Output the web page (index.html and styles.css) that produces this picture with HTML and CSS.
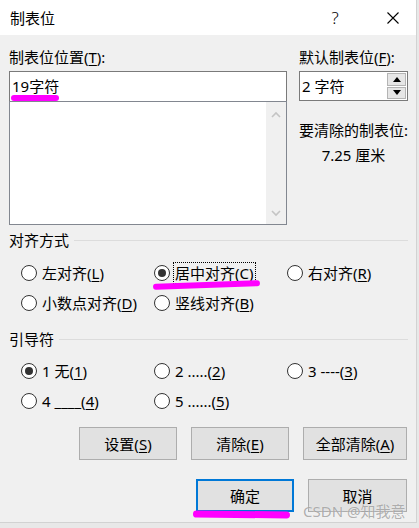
FILE: index.html
```html
<!DOCTYPE html>
<html lang="zh-CN">
<head>
<meta charset="utf-8">
<title>制表位</title>
<link rel="stylesheet" href="styles.css">
</head>
<body>
<div class="dialog">
  <div class="titlebar">
    <span class="title">制表位</span>
    <span class="tb-btn help">?</span>
    <span class="tb-btn close"><svg width="12" height="12" viewBox="0 0 12 12"><path d="M0.5 0.5L11.5 11.5M11.5 0.5L0.5 11.5" stroke="#000" stroke-width="1.1" fill="none"/></svg></span>
  </div>
  <div class="content">
    <div class="top">
      <div class="left">
        <div class="label">制表位位置(<u>T</u>):</div>
        <div class="input">19字符</div>
        <div class="listbox">
          <div class="vscroll">
            <svg width="10" height="7" viewBox="0 0 10 7"><path d="M1 6L5 2L9 6" stroke="#c4c4c4" stroke-width="1.6" fill="none"/></svg>
            <svg width="10" height="7" viewBox="0 0 10 7"><path d="M1 1L5 5L9 1" stroke="#c4c4c4" stroke-width="1.6" fill="none"/></svg>
          </div>
        </div>
      </div>
      <div class="right">
        <div class="label">默认制表位(<u>F</u>):</div>
        <div class="spinner">
          <span class="spin-text">2 字符</span>
          <div class="spin-btns">
            <div class="spin-btn"><svg width="8" height="5" viewBox="0 0 8 5"><path d="M0 5L4 0L8 5Z" fill="#000"/></svg></div>
            <div class="spin-btn"><svg width="8" height="5" viewBox="0 0 8 5"><path d="M0 0L4 5L8 0Z" fill="#000"/></svg></div>
          </div>
        </div>
        <div class="clear-label">要清除的制表位:</div>
        <div class="clear-value">7.25 厘米</div>
      </div>
    </div>

    <div class="group-head"><span>对齐方式</span><i class="rule"></i></div>
    <div class="radios">
      <div class="radio"><span class="dot"></span><span>左对齐(<u>L</u>)</span></div>
      <div class="radio"><span class="dot on"></span><span class="focus">居中对齐(<u>C</u>)</span></div>
      <div class="radio"><span class="dot"></span><span>右对齐(<u>R</u>)</span></div>
      <div class="radio"><span class="dot"></span><span>小数点对齐(<u>D</u>)</span></div>
      <div class="radio"><span class="dot"></span><span>竖线对齐(<u>B</u>)</span></div>
    </div>

    <div class="group-head second"><span>引导符</span><i class="rule"></i></div>
    <div class="radios leaders">
      <div class="radio"><span class="dot on"></span><span>1 无(<u>1</u>)</span></div>
      <div class="radio"><span class="dot"></span><span>2 .....(<u>2</u>)</span></div>
      <div class="radio"><span class="dot"></span><span>3 ----(<u>3</u>)</span></div>
      <div class="radio"><span class="dot"></span><span>4 ____(<u>4</u>)</span></div>
      <div class="radio"><span class="dot"></span><span>5 ......(<u>5</u>)</span></div>
    </div>

    <div class="btn-row actions">
      <div class="btn w98">设置(<u>S</u>)</div>
      <div class="btn w98">清除(<u>E</u>)</div>
      <div class="btn w104">全部清除(<u>A</u>)</div>
    </div>
    <div class="btn-row confirm">
      <div class="btn w98 default">确定</div>
      <div class="btn w99">取消</div>
    </div>
  </div>

  <div class="mark m1"></div>
  <div class="mark m2"></div>
  <div class="mark m3"></div>
  <div class="watermark">CSDN @知我意</div>
</div>
</body>
</html>
```

FILE: styles.css
```css
* { box-sizing: border-box; margin: 0; padding: 0; }
html, body { width: 419px; height: 528px; overflow: hidden; }
body {
  background: #e8e8e8;
  font-family: "Noto Sans", "Noto Sans CJK SC", sans-serif;
  font-size: 15px;
  color: #000;
}
u { text-decoration: underline; text-underline-offset: 2px; text-decoration-thickness: 1px; }

.dialog {
  position: relative;
  width: 417px;
  height: 523px;
  background: #f0f0f0;
  border-right: 1px solid #d2d2d2;
  border-bottom: 1px solid #d2d2d2;
}

.titlebar {
  height: 35px;
  background: #fff;
  display: flex;
  align-items: center;
  padding-left: 10px;
}
.title { line-height: 20px; }
.tb-btn {
  width: 46px;
  height: 35px;
  display: flex;
  align-items: center;
  justify-content: center;
}
.help { margin-left: auto; font-size: 17px; font-weight: 300; line-height: 20px; }
.close { margin-left: 12px; }

.content { padding: 12px 0 0 9px; width: 408px; }

.top { display: flex; gap: 12px; }
.left { width: 278px; }
.right { width: 109px; }
.label { line-height: 20px; margin-bottom: 4px; white-space: nowrap; }

.input {
  height: 30px;
  border: 1px solid #7a7a7a;
  border-bottom: none;
  background: #fff;
  padding-left: 2px;
  line-height: 28px;
}
.listbox {
  height: 124px;
  border: 1px solid #828790;
  background: #fff;
  display: flex;
  justify-content: flex-end;
}
.vscroll {
  width: 20px;
  background: #f0f0f0;
  display: flex;
  flex-direction: column;
  justify-content: space-between;
  align-items: center;
  padding: 9px 0 7px;
}

.spinner {
  display: flex;
  align-items: center;
  height: 30px;
  border: 1px solid #7a7a7a;
  background: #fff;
  padding: 1px 1px 1px 2px;
}
.spin-text { flex: 1; line-height: 20px; }
.spin-btns {
  width: 19px;
  align-self: stretch;
  display: flex;
  flex-direction: column;
  gap: 1px;
}
.spin-btn {
  flex: 1;
  border: 1px solid #b4b4b4;
  background: #e6e6e6;
  display: flex;
  align-items: center;
  justify-content: center;
}
.clear-label { margin-top: 17px; line-height: 25px; white-space: nowrap; }
.clear-value { line-height: 25px; text-align: center; }

.group-head {
  margin-top: 5px;
  display: flex;
  align-items: center;
  line-height: 20px;
}
.group-head.second { margin-top: 11px; }
.rule { flex: 1; height: 1px; background: #dcdcdc; margin-left: 5px; }

.radios {
  display: grid;
  grid-template-columns: repeat(3, 133px);
  grid-auto-rows: 30px;
  padding-left: 12px;
  margin-top: 8px;
}
.radios.leaders { margin-top: 7px; }
.radio { display: flex; align-items: center; gap: 5px; line-height: 20px; white-space: nowrap; }
.dot {
  flex: none;
  width: 16px;
  height: 16px;
  border: 1px solid #333;
  border-radius: 50%;
  background: #fff;
  display: flex;
  align-items: center;
  justify-content: center;
}
.dot.on::after {
  content: "";
  width: 8px;
  height: 8px;
  border-radius: 50%;
  background: #333;
}
.focus {
  display: inline-block;
  line-height: 18px;
  outline: 1px dotted #000;
  outline-offset: 1px;
}

.btn-row { display: flex; justify-content: flex-end; gap: 14px; padding-right: 1px; }
.actions { margin-top: 11px; }
.confirm { margin-top: 19px; }
.btn {
  height: 33px;
  border: 1px solid #adadad;
  background: #e1e1e1;
  display: flex;
  align-items: center;
  justify-content: center;
  line-height: 18px;
}
.btn.default { border: 2px solid #0078d7; }
.w98 { width: 98px; }
.w99 { width: 99px; }
.w104 { width: 104px; }

.mark { position: absolute; background: #ff00ff; border-radius: 4px; }
.m1 { left: 11px; top: 95px; width: 48px; height: 6px; }
.m2 { left: 153px; top: 282px; width: 107px; height: 6px; transform: rotate(-2deg); }
.m3 { left: 193px; top: 511px; width: 97px; height: 7px; transform: rotate(0.5deg); }

.watermark {
  position: absolute;
  left: 303px;
  top: 504px;
  line-height: 15px;
  color: rgba(110, 110, 110, 0.55);
  text-shadow: 0 0 1px rgba(255,255,255,0.8);
  white-space: nowrap;
}
```
